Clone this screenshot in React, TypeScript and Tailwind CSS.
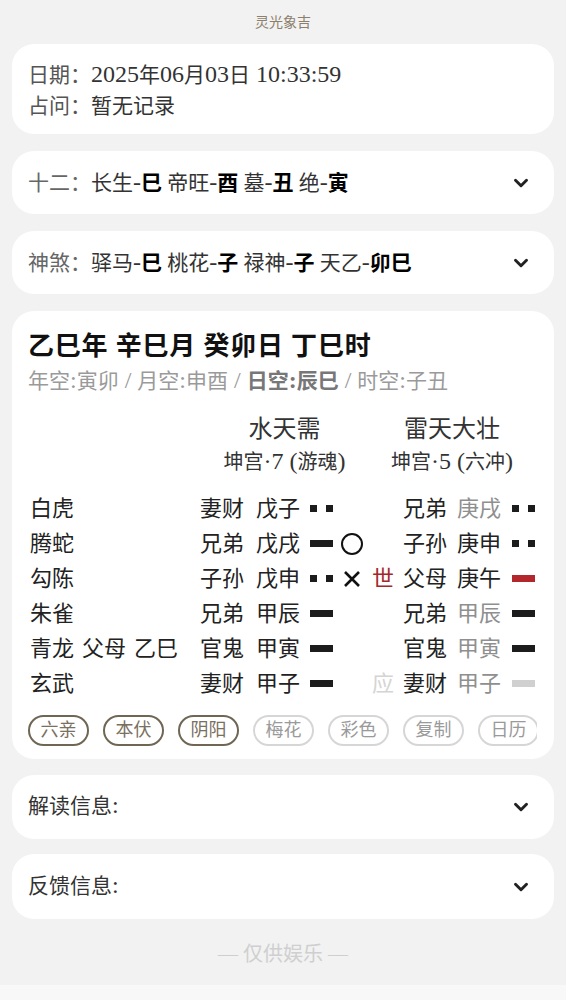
import { ChevronDown } from "lucide-react";

const font = "font-['Liberation_Serif','Noto_Sans_CJK_SC',serif]";

type Yao = "yin" | "yang";

const rows: {
  shen: string;
  fuRel?: string;
  fuGz?: string;
  rel: string;
  gz: string;
  yao: Yao;
  dong?: "o" | "x";
  mark?: "shi" | "ying";
  bRel: string;
  bGz: string;
  bGzGray?: boolean;
  bYao: Yao;
  bColor?: "red" | "light";
}[] = [
  { shen: "白虎", rel: "妻财", gz: "戊子", yao: "yin", bRel: "兄弟", bGz: "庚戌", bGzGray: true, bYao: "yin" },
  { shen: "腾蛇", rel: "兄弟", gz: "戊戌", yao: "yang", dong: "o", bRel: "子孙", bGz: "庚申", bYao: "yin" },
  { shen: "勾陈", rel: "子孙", gz: "戊申", yao: "yin", dong: "x", mark: "shi", bRel: "父母", bGz: "庚午", bYao: "yang", bColor: "red" },
  { shen: "朱雀", rel: "兄弟", gz: "甲辰", yao: "yang", bRel: "兄弟", bGz: "甲辰", bGzGray: true, bYao: "yang" },
  { shen: "青龙", fuRel: "父母", fuGz: "乙巳", rel: "官鬼", gz: "甲寅", yao: "yang", bRel: "官鬼", bGz: "甲寅", bGzGray: true, bYao: "yang" },
  { shen: "玄武", rel: "妻财", gz: "甲子", yao: "yang", mark: "ying", bRel: "妻财", bGz: "甲子", bGzGray: true, bYao: "yang", bColor: "light" },
];

const chips = [
  { label: "六亲", on: true },
  { label: "本伏", on: true },
  { label: "阴阳", on: true },
  { label: "梅花", on: false },
  { label: "彩色", on: false },
  { label: "复制", on: false },
  { label: "日历", on: false },
];

// latin digits look larger next to the CJK glyphs
function N({ children }: { children: React.ReactNode }) {
  return <span className="text-[24px] leading-none">{children}</span>;
}

function YaoMark({ type, color }: { type: Yao; color?: "red" | "light" }) {
  const bg = color === "red" ? "bg-[#b3262b]" : color === "light" ? "bg-[#d0d0d0]" : "bg-[#1c1c1c]";
  if (type === "yang") return <div className={`w-[23px] h-[7px] ${bg}`}></div>;
  return (
    <div className="w-[23px] flex justify-between">
      <div className={`w-[7px] h-[7px] ${bg}`}></div>
      <div className={`w-[7px] h-[7px] ${bg}`}></div>
    </div>
  );
}

function Section({ label, children }: { label: string; children: React.ReactNode }) {
  return (
    <div className="bg-white rounded-[22px] h-[63px] pl-4 pr-[22px] flex items-center justify-between">
      <div className="text-[21px] text-[#333] pt-[2px]">
        <span className="text-[#666]">{label}</span>
        {children}
      </div>
      <ChevronDown size={22} strokeWidth={3.2} className="text-[#222]" />
    </div>
  );
}

export default function App() {
  return (
    <div className={`min-h-screen bg-[#f2f2f2] ${font} flex flex-col`}>
      <div className="h-[44px] flex items-center justify-center text-[14px] text-[#8c7f6c]">灵光象吉</div>

      <div className="px-3 flex flex-col gap-[17px]">
        {/* 日期 */}
        <div className="bg-white rounded-[22px] h-[90px] px-4 pt-[16px] text-[21px] leading-[31px] text-[#333]">
          <div className="h-[31px]">
            <span className="text-[#555]">日期：</span>
            <N>2025</N>年<N>06</N>月<N>03</N>日<N> 10:33:59</N>
          </div>
          <div className="h-[31px]"><span className="text-[#555]">占问：</span>暂无记录</div>
        </div>

        <Section label="十二：">
          长生<N>-</N><b className="text-black">巳</b> 帝旺<N>-</N><b className="text-black">酉</b> 墓<N>-</N><b className="text-black">丑</b> 绝<N>-</N><b className="text-black">寅</b>
        </Section>

        <Section label="神煞：">
          驿马<N>-</N><b className="text-black">巳</b> 桃花<N>-</N><b className="text-black">子</b> 禄神<N>-</N><b className="text-black">子</b> 天乙<N>-</N><b className="text-black">卯巳</b>
        </Section>

        {/* 卦 */}
        <div className="bg-white rounded-[22px] h-[448px] pl-4 pr-0 pt-[20px]">
          <div className="h-[32px] text-[26px] leading-[32px] font-bold text-[#111] tracking-[0.8px]">乙巳年 辛巳月 癸卯日 丁巳时</div>
          <div className="h-[30px] text-[21px] leading-[30px] text-[#9a9a9a] mt-[3px]">
            年空<N>:</N>寅卯<N> / </N>月空<N>:</N>申酉<N> / </N>
            <span className="font-bold text-[#777]">日空<N>:</N>辰巳</span>
            <N> / </N>时空<N>:</N>子丑
          </div>

          <div className="grid grid-cols-[54px_52px_66px_56px_54px_28px_31px_34px_54px_55px_23px] grid-rows-[32px_34px] mt-[17px] text-[#333]">
            <div className="col-start-4 col-span-4 text-center text-[24px] leading-[32px]">水天需</div>
            <div className="col-span-4 text-center text-[24px] leading-[32px]">雷天大壮</div>
            <div className="col-start-4 col-span-4 text-center text-[20px] leading-[34px]">
              坤宫<N>·7 (</N>游魂<N>)</N>
            </div>
            <div className="col-span-4 text-center text-[20px] leading-[34px]">
              坤宫<N>·5 (</N>六冲<N>)</N>
            </div>
          </div>

          <div className="mt-[12px] flex flex-col">
            {rows.map((r) => (
              <div
                key={r.shen}
                className="grid grid-cols-[54px_52px_66px_56px_54px_28px_31px_34px_54px_55px_23px] h-[35px] items-center text-[22px] text-[#222]"
              >
                <div className="pl-[2px]">{r.shen}</div>
                <div>{r.fuRel}</div>
                <div>{r.fuGz}</div>
                <div>{r.rel}</div>
                <div>{r.gz}</div>
                <div className="flex items-center">
                  <YaoMark type={r.yao} />
                </div>
                <div className="flex items-center">
                  {r.dong === "o" && <div className="w-[22px] h-[22px] rounded-full border-2 border-[#111] ml-[3px]"></div>}
                  {r.dong === "x" && (
                    <svg width="22" height="22" viewBox="0 0 22 22" className="ml-[3px]">
                      <path d="M4 4 L18 18 M18 4 L4 18" stroke="#111" strokeWidth="2.6" />
                    </svg>
                  )}
                </div>
                <div className="pl-[3px]">
                  {r.mark === "shi" && <span className="text-[#a3272b]">世</span>}
                  {r.mark === "ying" && <span className="text-[#d4d4d4]">应</span>}
                </div>
                <div>{r.bRel}</div>
                <div className={r.bGzGray ? "text-[#8f8f8f]" : ""}>{r.bGz}</div>
                <div className="flex items-center">
                  <YaoMark type={r.bYao} color={r.bColor} />
                </div>
              </div>
            ))}
          </div>

          <div className="mt-[14px] mr-[17px] overflow-hidden">
            <div className="flex gap-[14px] w-max">
              {chips.map((c) => (
                <div
                  key={c.label}
                  className={`w-[61px] h-[31px] rounded-full flex items-center justify-center text-[18px] border-2 ${
                    c.on ? "border-[#6f6654] text-[#7a705f]" : "border-[#d6d6d6] text-[#9a9a9a]"
                  }`}
                >
                  {c.label}
                </div>
              ))}
            </div>
          </div>
        </div>

        <div className="bg-white rounded-[22px] h-[64px] pl-4 pr-[22px] flex items-center justify-between -mt-[1px]">
          <div className="text-[21px] text-[#333]">解读信息<N>:</N></div>
          <ChevronDown size={22} strokeWidth={3.2} className="text-[#222]" />
        </div>

        <div className="bg-white rounded-[22px] h-[65px] pl-4 pr-[22px] flex items-center justify-between -mt-[2px]">
          <div className="text-[21px] text-[#333]">反馈信息<N>:</N></div>
          <ChevronDown size={22} strokeWidth={3.2} className="text-[#222]" />
        </div>
      </div>

      <div className="h-[62px] flex items-center justify-center text-[20px] text-[#cfcfcf] mt-[4px]">— 仅供娱乐 —</div>
      <div className="h-[20px] bg-[#f8f8f8]"></div>
    </div>
  );
}
